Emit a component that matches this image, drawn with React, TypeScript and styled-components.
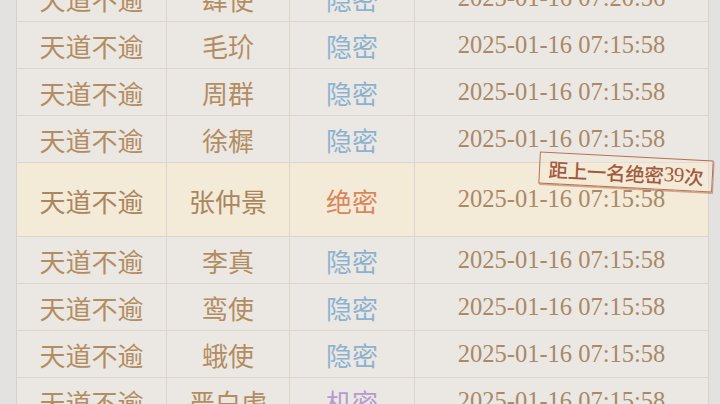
import React from "react";
import styled, { createGlobalStyle } from "styled-components";

const Global = createGlobalStyle`
  html, body { margin: 0; padding: 0; background: #e4e2e0; overflow: hidden; }
  #root { width: 720px; height: 404px; overflow: hidden; }
`;

type Level = "hidden" | "top" | "secret";

const levelColor: Record<Level, string> = {
  hidden: "#8db2cf",
  top: "#d8875a",
  secret: "#b79ad0",
};

const levelText: Record<Level, string> = {
  hidden: "隐密",
  top: "绝密",
  secret: "机密",
};

const Page = styled.div`
  display: flex;
  align-items: flex-start;
  width: 720px;
  height: 404px;
  background: #e4e2e0;
`;

const Gutter = styled.div<{ $w: number }>`
  width: ${(p) => p.$w}px;
  height: 404px;
  flex: none;
  background: #e3e2e1;
`;

const Table = styled.div`
  width: 691px;
  flex: none;
  margin-top: -25px;
  border-left: 1px solid #d6d1ca;
  border-right: 1px solid #d6d1ca;
  display: flex;
  flex-direction: column;
  background: #ebe8e3;
`;

const Row = styled.div<{ $hl?: boolean }>`
  position: relative;
  flex: none;
  display: grid;
  grid-template-columns: 150px 123px 125px 1fr;
  height: ${(p) => (p.$hl ? 74 : 47)}px;
  background: ${(p) => (p.$hl ? "#f3ead8" : "#ebe8e3")};
  border-bottom: 1px solid #dcd5cb;
  box-sizing: border-box;
`;

const Cell = styled.div<{ $color: string; $last?: boolean }>`
  display: flex;
  align-items: center;
  justify-content: center;
  padding-top: 2px;
  border-right: ${(p) => (p.$last ? "none" : "1px solid #dcd5cb")};
  color: ${(p) => p.$color};
  font-family: "Noto Sans CJK SC", "Noto Sans", sans-serif;
  font-size: 26px;
  line-height: 1;
  white-space: nowrap;
`;

const DateCell = styled(Cell)`
  font-family: "Liberation Serif", "Noto Sans CJK SC", serif;
  font-size: 24.5px;
  padding-top: 0;
`;

const Stamp = styled.div`
  position: absolute;
  left: 522px;
  top: -7px;
  width: 174px;
  height: 32px;
  box-sizing: border-box;
  border: 1.5px solid #b86e50;
  box-shadow: 1px 1.5px 0 0 rgba(184, 110, 80, 0.55);
  transform: rotate(3deg);
  display: flex;
  align-items: center;
  justify-content: center;
  color: #a35a3e;
  font-family: "Noto Sans CJK SC", serif;
  font-size: 19.5px;
  font-weight: 500;
  letter-spacing: -0.3px;
  white-space: nowrap;
  background: rgba(243, 234, 216, 0.4);
`;

const Num = styled.span`
  font-family: "Liberation Serif", serif;
  font-size: 21px;
`;

const rows: { sect: string; name: string; level: Level; time: string; hl?: boolean }[] = [
  { sect: "天道不逾", name: "肆使", level: "hidden", time: "2025-01-16 07:20:56" },
  { sect: "天道不逾", name: "毛玠", level: "hidden", time: "2025-01-16 07:15:58" },
  { sect: "天道不逾", name: "周群", level: "hidden", time: "2025-01-16 07:15:58" },
  { sect: "天道不逾", name: "徐穉", level: "hidden", time: "2025-01-16 07:15:58" },
  { sect: "天道不逾", name: "张仲景", level: "top", time: "2025-01-16 07:15:58", hl: true },
  { sect: "天道不逾", name: "李真", level: "hidden", time: "2025-01-16 07:15:58" },
  { sect: "天道不逾", name: "鸾使", level: "hidden", time: "2025-01-16 07:15:58" },
  { sect: "天道不逾", name: "蛾使", level: "hidden", time: "2025-01-16 07:15:58" },
  { sect: "天道不逾", name: "严白虎", level: "secret", time: "2025-01-16 07:15:58" },
];

export default function App() {
  return (
    <>
      <Global />
      <Page>
        <Gutter $w={16} />
        <Table>
          {rows.map((r, i) => {
            const text = r.hl ? "#a9865d" : "#b38d62";
            return (
              <Row key={i} $hl={r.hl}>
                <Cell $color={text}>{r.sect}</Cell>
                <Cell $color={text}>{r.name}</Cell>
                <Cell $color={levelColor[r.level]}>{levelText[r.level]}</Cell>
                <DateCell $color="#a98966" $last>
                  {r.time}
                </DateCell>
                {r.hl && (
                  <Stamp>
                    距上一名绝密<Num>39</Num>次
                  </Stamp>
                )}
              </Row>
            );
          })}
        </Table>
        <Gutter $w={13} />
      </Page>
    </>
  );
}
